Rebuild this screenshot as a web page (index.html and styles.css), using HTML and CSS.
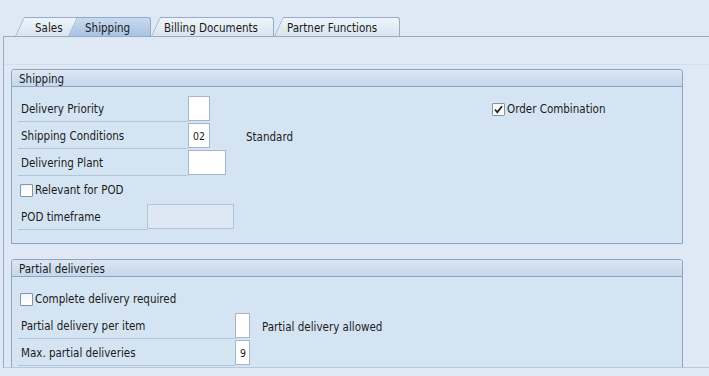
FILE: index.html
```
<!DOCTYPE html>
<html lang="en">
<head>
    <meta charset="UTF-8">
    <title>Sales Order - Shipping</title>
    <link rel="stylesheet" href="styles.css">
</head>
<body>
    <div class="tabs">
        <div class="tab tab-sales">Sales</div>
        <div class="tab tab-shipping active">Shipping</div>
        <div class="tab tab-billing">Billing Documents</div>
        <div class="tab tab-partner">Partner Functions</div>
    </div>

    <div class="frame">
        <div class="toolbar"></div>

        <section class="group">
            <div class="group-title">Shipping</div>
            <div class="group-body">
                <div class="row">
                    <span class="lbl lbl-main">Delivery Priority</span>
                    <span class="field w-small"></span>
                    <span class="check-item order-comb">
                        <span class="box checked">
                            <svg width="11" height="11" viewBox="0 0 11 11"><path d="M2 5.5 L4.3 8.3 L9 2.2" fill="none" stroke="#222" stroke-width="1.8"/></svg>
                        </span>Order Combination
                    </span>
                </div>
                <div class="row">
                    <span class="lbl lbl-main">Shipping Conditions</span>
                    <span class="field w-small">02</span>
                    <span class="desc desc-standard">Standard</span>
                </div>
                <div class="row">
                    <span class="lbl lbl-main">Delivering Plant</span>
                    <span class="field w-plant"></span>
                </div>
                <div class="row">
                    <span class="check-item"><span class="box"></span>Relevant for POD</span>
                </div>
                <div class="row">
                    <span class="lbl lbl-pod">POD timeframe</span>
                    <span class="field w-pod disabled"></span>
                </div>
            </div>
        </section>

        <section class="group group-partial">
            <div class="group-title">Partial deliveries</div>
            <div class="group-body">
                <div class="row">
                    <span class="check-item"><span class="box"></span>Complete delivery required</span>
                </div>
                <div class="row">
                    <span class="lbl lbl-partial">Partial delivery per item</span>
                    <span class="field w-tiny"></span>
                    <span class="desc desc-partial">Partial delivery allowed</span>
                </div>
                <div class="row">
                    <span class="lbl lbl-partial">Max. partial deliveries</span>
                    <span class="field w-tiny">9</span>
                </div>
                <div class="row">
                    <span class="lbl lbl-partial"></span>
                </div>
            </div>
        </section>
    </div>
</body>
</html>
```

FILE: styles.css
```
/* VARIABLES */

:root {
    --page-bg: #dfe9f5;
    --group-bg: #d5e4f3;
    --line: #8fa5bf;
    --tab-line: #96abc5;
    --field-line: #a6b6ca;
    --text: #1a1a1a;
}

/* BASE */

html {
    font-family: "DejaVu Sans Condensed", "DejaVu Sans", sans-serif;
    font-stretch: condensed;
    font-size: 11.5px;
    color: var(--text);
}

body {
    margin: 0;
    background-color: var(--page-bg);
    height: 376px;
    overflow: hidden;
}

/* TABS */

.tabs {
    display: flex;
    align-items: flex-end;
    box-sizing: border-box;
    height: 37px;
    margin-left: 3px;
    border-bottom: 1px solid var(--tab-line);
}

.tab {
    position: relative;
    z-index: 2;
    box-sizing: border-box;
    height: 19px;
    line-height: 19px;
    padding-top: 1px;
    padding-left: 4px;
    white-space: nowrap;
    background: linear-gradient(#eef4fa, #d8e4f1);
    border-top: 1px solid var(--tab-line);
    border-right: 1px solid var(--tab-line);
    border-top-right-radius: 3px;
}

.tab::before {
    content: "";
    position: absolute;
    z-index: -1;
    top: -1px;
    bottom: 0;
    left: -9px;
    width: 14px;
    background: inherit;
    border-left: 1px solid var(--tab-line);
    border-top: 1px solid var(--tab-line);
    border-top-left-radius: 2px;
    transform: skewX(-25deg);
    transform-origin: bottom left;
}

.tab.active {
    z-index: 5;
    background: linear-gradient(#c8daee, #a9c3e2);
}

.tab-sales {
    z-index: 1;
    width: 56px;
    margin-left: 21px;
    padding-left: 11px;
}

.tab-shipping {
    width: 74px;
    margin-left: -3px;
    padding-left: 8px;
}

.tab-billing {
    z-index: 3;
    width: 114px;
    margin-left: 9px;
}

.tab-partner {
    z-index: 4;
    width: 117px;
    margin-left: 9px;
}

/* FRAME */

.frame {
    box-sizing: border-box;
    height: 331px;
    margin-left: 3px;
    border-left: 1px solid var(--tab-line);
    border-bottom: 1px solid #b9c9db;
    overflow: hidden;
}

.toolbar {
    height: 27px;
    border-bottom: 1px solid #d2dfed;
}

/* GROUP BOXES */

.group {
    width: 672px;
    box-sizing: border-box;
    margin: 4px 0 0 7px;
    background-color: var(--group-bg);
    border: 1px solid var(--line);
    border-radius: 3px 3px 0 0;
}

.group-partial {
    margin-top: 15px;
}

.group-title {
    height: 16px;
    line-height: 18px;
    padding-left: 7px;
    background: linear-gradient(#dbe7f4, #c4d7ec);
    border-bottom: 1px solid var(--line);
    border-radius: 2px 2px 0 0;
}

.group-body {
    padding: 8px 6px 13px 6px;
}

/* ROWS */

.row {
    display: flex;
    height: 27px;
}

.lbl {
    display: flex;
    align-items: center;
    box-sizing: border-box;
    height: 27px;
    padding: 2px 0 0 3px;
    border-bottom: 1px solid #b3c4d8;
}

.lbl-main { width: 170px; }
.lbl-pod { width: 129px; }
.lbl-partial { width: 217px; }

.field {
    box-sizing: border-box;
    height: 25px;
    margin-top: 1px;
    padding: 1px 0 0 4px;
    line-height: 23px;
    font-size: 10.5px;
    background-color: #fff;
    border: 1px solid var(--field-line);
}

.field.disabled {
    background-color: #dde8f4;
    border-color: #b4c3d5;
}

.w-small { width: 22px; }
.w-plant { width: 38px; }
.w-pod { width: 87px; }
.w-tiny { width: 15px; }

.desc {
    align-self: center;
    padding-top: 2px;
}

.desc-standard { margin-left: 36px; }
.desc-partial { margin-left: 12px; }

/* CHECKBOXES */

.check-item {
    display: flex;
    align-items: center;
    margin-left: 2px;
    padding-top: 1px;
}

.order-comb {
    margin-left: 282px;
}

.box {
    display: flex;
    align-items: center;
    justify-content: center;
    box-sizing: border-box;
    width: 13px;
    height: 13px;
    margin-right: 2px;
    background: linear-gradient(#f4f6f8, #ffffff);
    border: 1px solid #8593a6;
    border-radius: 1px;
}
```
